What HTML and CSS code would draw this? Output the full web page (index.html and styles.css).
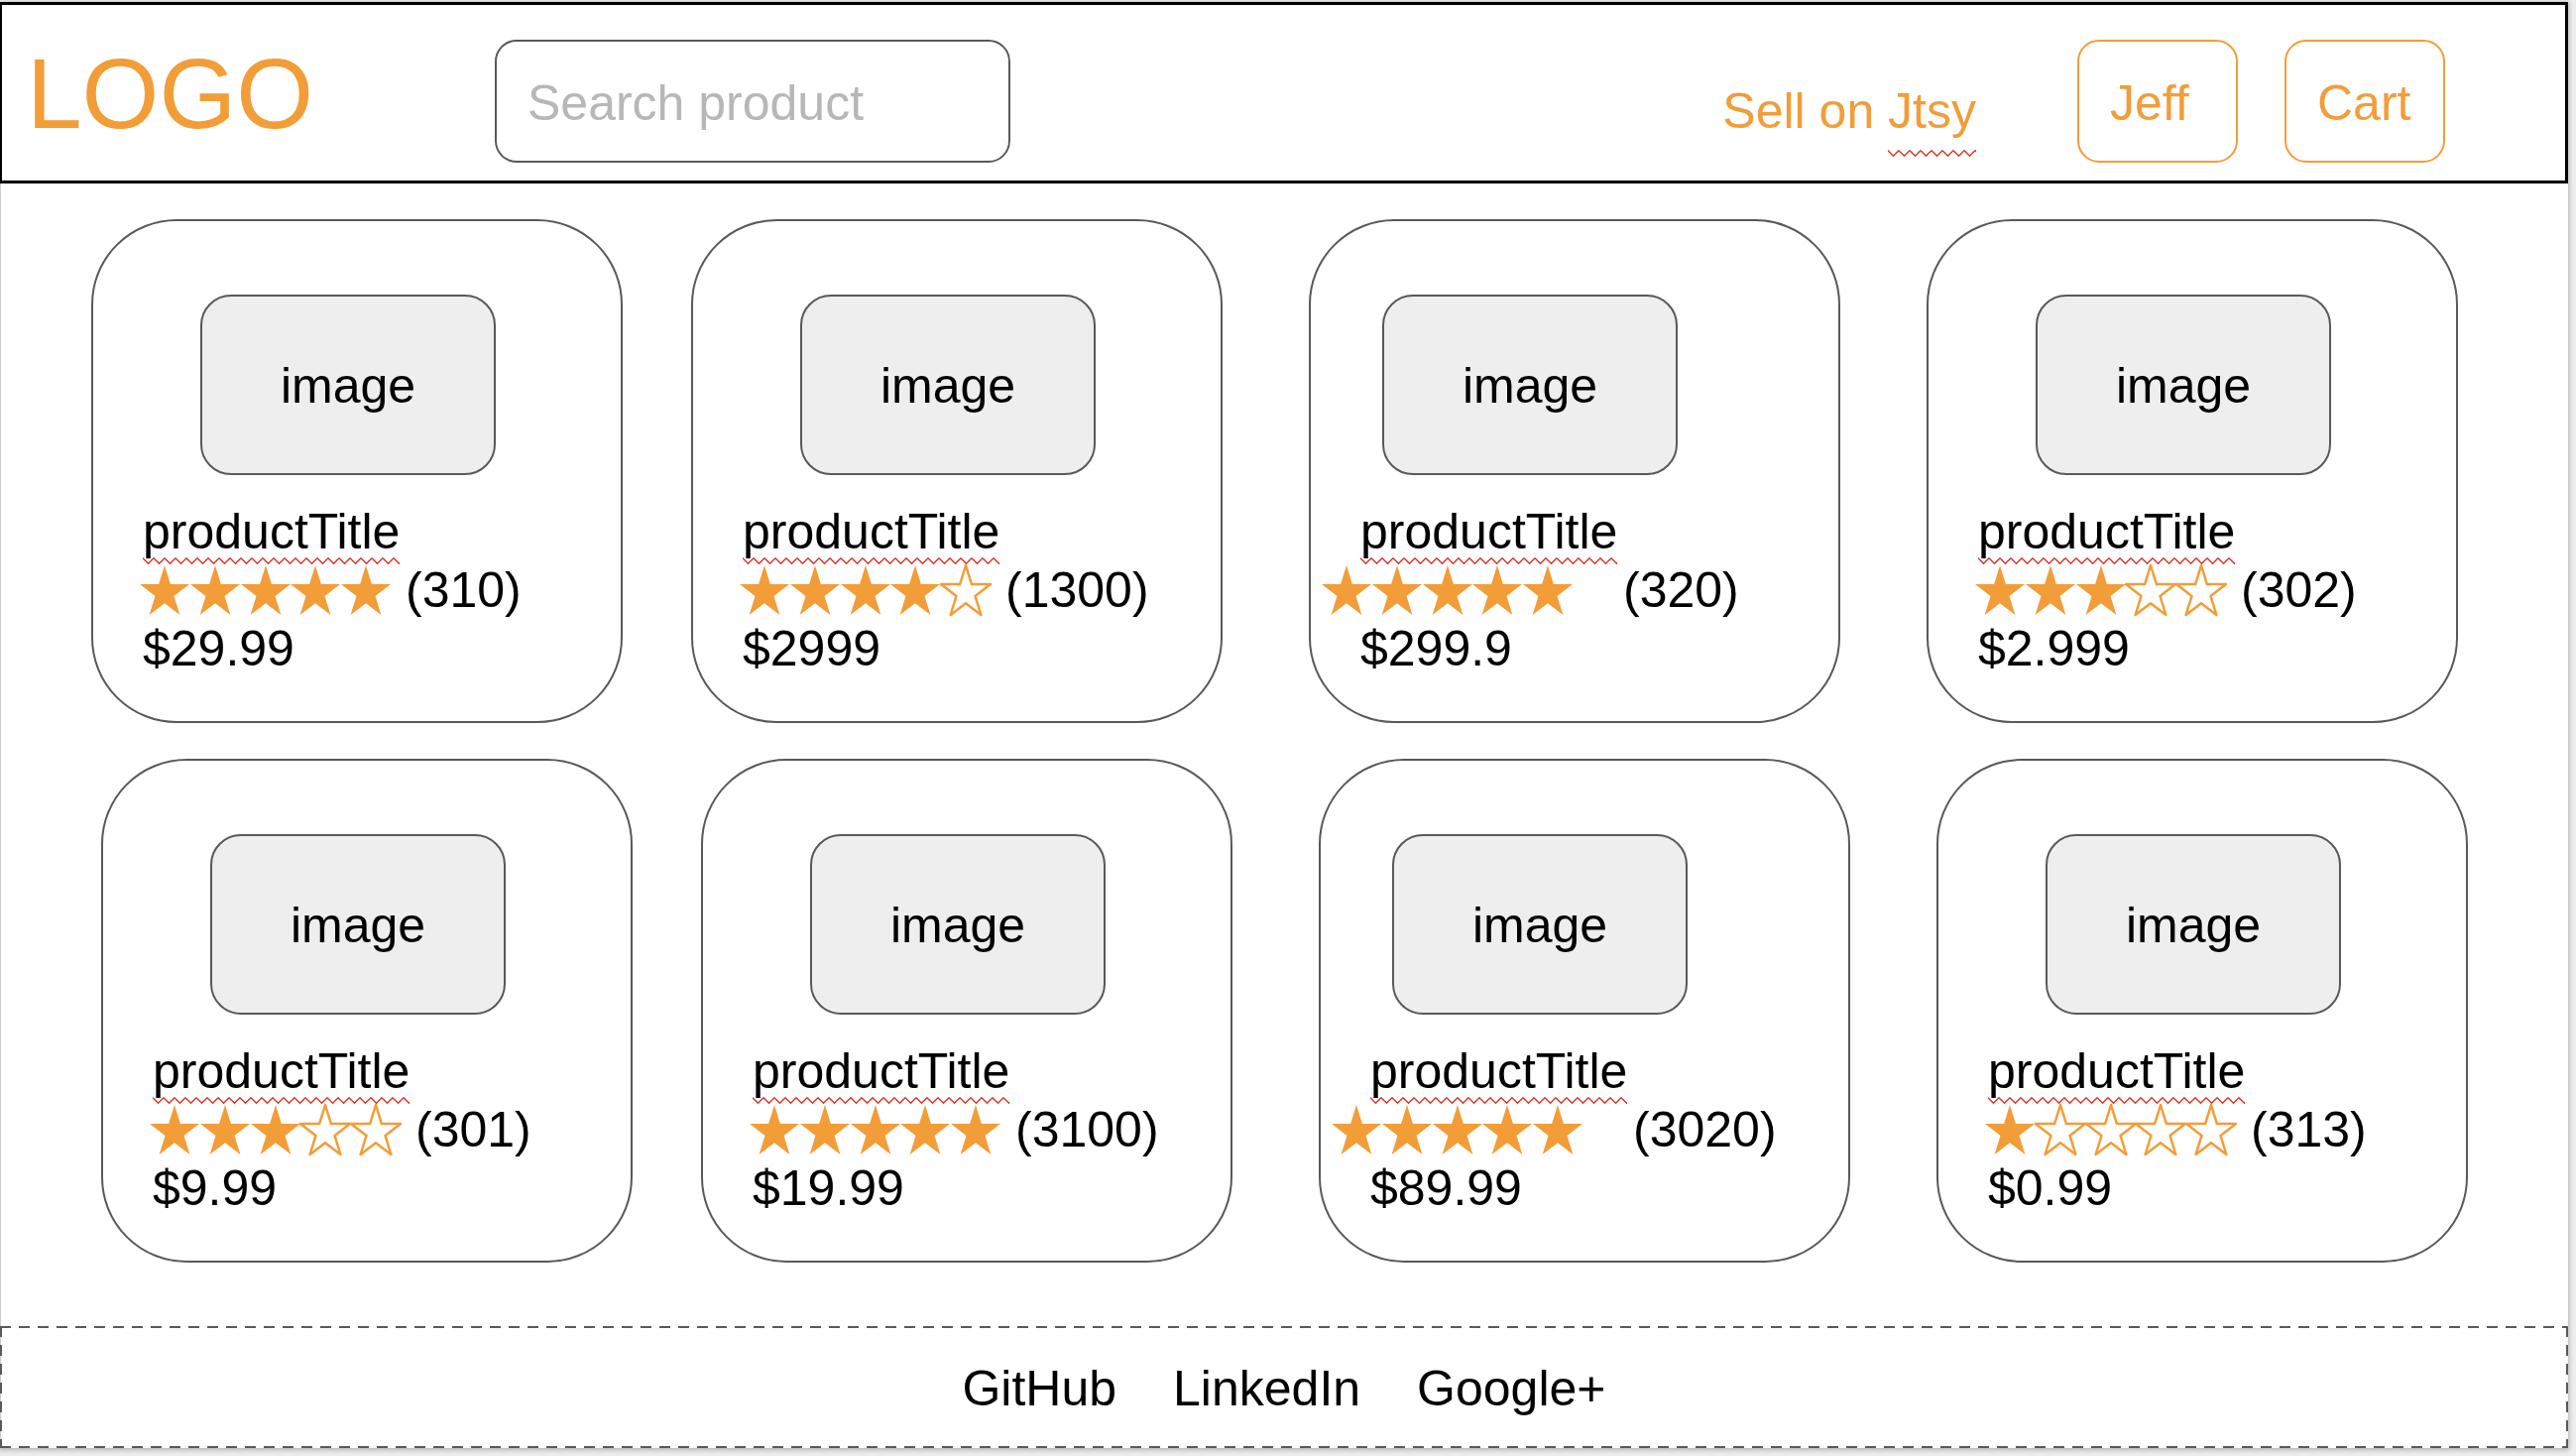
FILE: index.html
```html
<!DOCTYPE html>
<html lang="en">
<head>
<meta charset="utf-8">
<meta name="viewport" content="width=device-width, initial-scale=1">
<title>Jtsy</title>
<link rel="stylesheet" href="styles.css">
</head>
<body>
<svg class="sprite" aria-hidden="true">
  <symbol id="star" viewBox="0 0 50 50" overflow="visible">
    <path d="M25 0L30.9 19.1H50L34.5 30.9L40.4 50L25 38.2L9.6 50L15.5 30.9L0 19.1H19.1Z"/>
  </symbol>
</svg>
<div class="page">
  <header class="header">
    <a class="logo" href="#">LOGO</a>
    <form class="search" role="search">
      <input class="search-input" type="search" placeholder="Search product" aria-label="Search product">
    </form>
    <nav class="header-nav">
      <a class="sell-link" href="#">Sell on <span class="misspelled misspelled--low">Jtsy</span></a>
      <button class="button" type="button">Jeff</button>
      <button class="button" type="button">Cart</button>
    </nav>
  </header>

  <main class="products">
    <div class="row">
      <article class="card">
        <div class="photo">image</div>
        <h2 class="title"><span class="misspelled">productTitle</span></h2>
        <div class="rating">
          <svg class="stars" width="253" height="50" viewBox="0 0 253 50" role="img" aria-label="5 of 5 stars"><use class="star-full" href="#star" x="0" width="50" height="50"/><use class="star-full" href="#star" x="51" width="50" height="50"/><use class="star-full" href="#star" x="102" width="50" height="50"/><use class="star-full" href="#star" x="152" width="50" height="50"/><use class="star-full" href="#star" x="203" width="50" height="50"/></svg>
          <span>(310)</span>
        </div>
        <div class="price">$29.99</div>
      </article>
      <article class="card">
        <div class="photo">image</div>
        <h2 class="title"><span class="misspelled">productTitle</span></h2>
        <div class="rating">
          <svg class="stars" width="253" height="50" viewBox="0 0 253 50" role="img" aria-label="4 of 5 stars"><use class="star-full" href="#star" x="0" width="50" height="50"/><use class="star-full" href="#star" x="51" width="50" height="50"/><use class="star-full" href="#star" x="102" width="50" height="50"/><use class="star-full" href="#star" x="152" width="50" height="50"/><use class="star-empty" href="#star" x="203" width="50" height="50"/></svg>
          <span>(1300)</span>
        </div>
        <div class="price">$2999</div>
      </article>
      <article class="card card--shifted">
        <div class="photo">image</div>
        <h2 class="title"><span class="misspelled">productTitle</span></h2>
        <div class="rating">
          <svg class="stars" width="253" height="50" viewBox="0 0 253 50" role="img" aria-label="5 of 5 stars"><use class="star-full" href="#star" x="0" width="50" height="50"/><use class="star-full" href="#star" x="51" width="50" height="50"/><use class="star-full" href="#star" x="102" width="50" height="50"/><use class="star-full" href="#star" x="152" width="50" height="50"/><use class="star-full" href="#star" x="203" width="50" height="50"/></svg>
          <span>(320)</span>
        </div>
        <div class="price">$299.9</div>
      </article>
      <article class="card">
        <div class="photo">image</div>
        <h2 class="title"><span class="misspelled">productTitle</span></h2>
        <div class="rating">
          <svg class="stars" width="253" height="50" viewBox="0 0 253 50" role="img" aria-label="3 of 5 stars"><use class="star-full" href="#star" x="0" width="50" height="50"/><use class="star-full" href="#star" x="51" width="50" height="50"/><use class="star-full" href="#star" x="102" width="50" height="50"/><use class="star-empty" href="#star" x="152" width="50" height="50"/><use class="star-empty" href="#star" x="203" width="50" height="50"/></svg>
          <span>(302)</span>
        </div>
        <div class="price">$2.999</div>
      </article>
    </div>

    <div class="row row--indented">
      <article class="card">
        <div class="photo">image</div>
        <h2 class="title"><span class="misspelled">productTitle</span></h2>
        <div class="rating">
          <svg class="stars" width="253" height="50" viewBox="0 0 253 50" role="img" aria-label="3 of 5 stars"><use class="star-full" href="#star" x="0" width="50" height="50"/><use class="star-full" href="#star" x="51" width="50" height="50"/><use class="star-full" href="#star" x="102" width="50" height="50"/><use class="star-empty" href="#star" x="152" width="50" height="50"/><use class="star-empty" href="#star" x="203" width="50" height="50"/></svg>
          <span>(301)</span>
        </div>
        <div class="price">$9.99</div>
      </article>
      <article class="card">
        <div class="photo">image</div>
        <h2 class="title"><span class="misspelled">productTitle</span></h2>
        <div class="rating">
          <svg class="stars" width="253" height="50" viewBox="0 0 253 50" role="img" aria-label="5 of 5 stars"><use class="star-full" href="#star" x="0" width="50" height="50"/><use class="star-full" href="#star" x="51" width="50" height="50"/><use class="star-full" href="#star" x="102" width="50" height="50"/><use class="star-full" href="#star" x="152" width="50" height="50"/><use class="star-full" href="#star" x="203" width="50" height="50"/></svg>
          <span>(3100)</span>
        </div>
        <div class="price">$19.99</div>
      </article>
      <article class="card card--shifted">
        <div class="photo">image</div>
        <h2 class="title"><span class="misspelled">productTitle</span></h2>
        <div class="rating">
          <svg class="stars" width="253" height="50" viewBox="0 0 253 50" role="img" aria-label="5 of 5 stars"><use class="star-full" href="#star" x="0" width="50" height="50"/><use class="star-full" href="#star" x="51" width="50" height="50"/><use class="star-full" href="#star" x="102" width="50" height="50"/><use class="star-full" href="#star" x="152" width="50" height="50"/><use class="star-full" href="#star" x="203" width="50" height="50"/></svg>
          <span>(3020)</span>
        </div>
        <div class="price">$89.99</div>
      </article>
      <article class="card">
        <div class="photo">image</div>
        <h2 class="title"><span class="misspelled">productTitle</span></h2>
        <div class="rating">
          <svg class="stars" width="253" height="50" viewBox="0 0 253 50" role="img" aria-label="1 of 5 stars"><use class="star-full" href="#star" x="0" width="50" height="50"/><use class="star-empty" href="#star" x="51" width="50" height="50"/><use class="star-empty" href="#star" x="102" width="50" height="50"/><use class="star-empty" href="#star" x="152" width="50" height="50"/><use class="star-empty" href="#star" x="203" width="50" height="50"/></svg>
          <span>(313)</span>
        </div>
        <div class="price">$0.99</div>
      </article>
    </div>
  </main>

  <footer class="footer">
    <a href="#">GitHub</a>
    <a href="#">LinkedIn</a>
    <a href="#">Google+</a>
  </footer>
</div>
</body>
</html>
```

FILE: styles.css
```css
:root {
  --orange: #f29d38;
  --line: #595959;
}

* {
  box-sizing: border-box;
}

body {
  margin: 0;
  padding: 2px 8px 8px 0;
  background: #eee;
  color: #000;
  font-family: "Liberation Sans", Arial, sans-serif;
  font-size: 50px;
  line-height: 59px;
}

a {
  color: inherit;
  text-decoration: none;
}

.sprite {
  position: absolute;
  width: 0;
  height: 0;
}

.page {
  background: #fff;
  box-shadow: inset 1px 0 #ccc, 0 1px 5px 1px rgba(0, 0, 0, 0.25);
}

/* Header */

.header {
  display: flex;
  align-items: flex-start;
  padding: 35px 121px 18px 25px;
  border: 3px solid #000;
  border-width: 3px 3px 3px 2px;
  background: #fff;
}

.logo {
  color: var(--orange);
  font-size: 100px;
  line-height: 108px;
}

.search {
  flex: 0 1 520px;
  margin-left: 183px;
}

.search-input,
.button {
  display: block;
  height: 124px;
  padding: 4px 31px 0;
  border: 2px solid var(--line);
  border-radius: 22px;
  background: #fff;
  font: inherit;
  text-align: left;
}

.search-input {
  width: 100%;
  appearance: none;
  outline: none;
}

.search-input::placeholder {
  color: #b7b7b7;
  opacity: 1;
}

.header-nav {
  display: flex;
  gap: 47px;
  margin-left: auto;
}

.sell-link {
  margin-right: 55px;
  padding-top: 20px;
  color: var(--orange);
  line-height: 104px;
  white-space: nowrap;
}

.button {
  width: 162px;
  border-color: var(--orange);
  color: var(--orange);
}

/* Red zigzag under words the spell checker does not know */

.misspelled {
  position: relative;
  display: inline-block;
  line-height: 59px;
}

.misspelled::after {
  content: "";
  position: absolute;
  top: calc(100% - 4px);
  left: 0;
  width: 100%;
  height: 7px;
  background: url("data:image/svg+xml,%3Csvg xmlns='http://www.w3.org/2000/svg' width='11' height='7'%3E%3Cpath d='M-1 -0.4L0 .8L5.5 6.2L11 .8L12 -0.4' fill='none' stroke='%23d93025' stroke-width='1.4'/%3E%3C/svg%3E") repeat-x;
}

.misspelled--low::after {
  top: calc(100% + 9px);
}

/* Products */

.products {
  display: flex;
  flex-direction: column;
  gap: 36px;
  padding: 36px 0 64px;
}

.row {
  display: flex;
  gap: 87px;
  padding: 0 111px 0 92px;
}

.row--indented {
  padding: 0 101px 0 102px;
}

.card {
  --shift: 0px;
  flex: 1 1 0;
  padding: 74px 0 43px 50px;
  border: 2px solid var(--line);
  border-radius: 86px;
}

.card:first-child {
  margin-right: -18px;
}

.card--shifted {
  --shift: 36px;
}

.photo {
  display: flex;
  align-items: center;
  justify-content: center;
  width: 298px;
  height: 182px;
  margin: 0 0 28px calc(58px - var(--shift));
  padding-top: 2px;
  border: 2px solid var(--line);
  border-radius: 31px;
  background: #eee;
}

.title {
  margin: 0;
  font-size: inherit;
  font-weight: normal;
  height: 59px;
}

.rating {
  display: flex;
  align-items: center;
}

.stars {
  flex: none;
  margin-bottom: 2px;
  margin-left: calc(-3px - var(--shift));
  margin-right: calc(15px + var(--shift));
  overflow: visible;
}

.star-full {
  fill: var(--orange);
}

.star-empty {
  fill: #fff;
  stroke: var(--orange);
  stroke-width: 2.5;
  stroke-linejoin: round;
}

/* Footer, framed by long dashes on all four sides */

.footer {
  --across: repeating-linear-gradient(90deg, var(--line) 0 11px, transparent 11px 19px);
  --down: repeating-linear-gradient(180deg, var(--line) 0 11px, transparent 11px 19px);
  display: flex;
  justify-content: center;
  gap: 57px;
  padding: 34px 0 30px;
  background:
    var(--across) top / 100% 2px no-repeat,
    var(--across) bottom / 100% 2px no-repeat,
    var(--down) left / 2px 100% no-repeat,
    var(--down) right / 2px 100% no-repeat;
}
```
